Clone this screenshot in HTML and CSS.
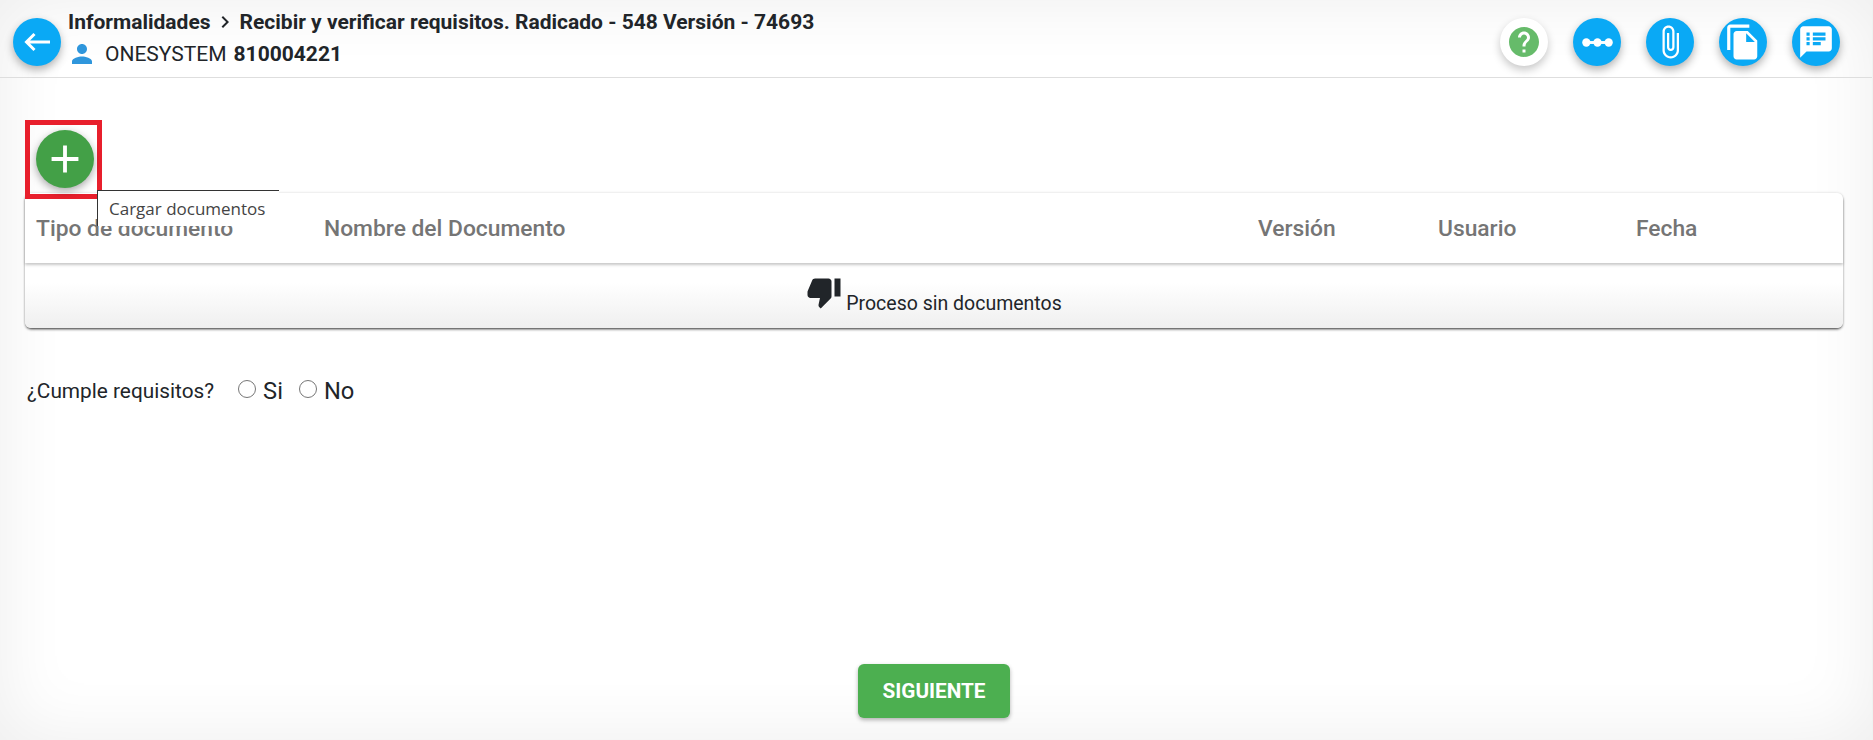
FILE: index.html
```html
<!DOCTYPE html>
<html lang="es">
<head>
<meta charset="utf-8">
<title>Recibir y verificar requisitos</title>
<link rel="stylesheet" href="styles.css">
</head>
<body>
<div class="app">
  <header class="topbar">
    <button class="fab fab-blue back" aria-label="Volver">
      <svg class="ico-back" viewBox="0 0 28 20"><path d="M27 10H4M11.500 2L3.500 10L11.500 18"/></svg>
    </button>
    <div class="heading">
      <div class="crumbs">
        <span>Informalidades</span>
        <svg class="ico-chevron" viewBox="0 0 24 24"><path d="M8.59 16.59L13.17 12 8.59 7.41 10 6l6 6-6 6z"/></svg>
        <span>Recibir y verificar requisitos. Radicado - 548 Versión - 74693</span>
      </div>
      <div class="owner">
        <svg class="ico-person" viewBox="0 0 24 24"><path d="M12 12c2.210 0 4-1.790 4-4s-1.790-4-4-4-4 1.790-4 4 1.790 4 4 4zm0 2c-2.670 0-8 1.340-8 4v2h16v-2c0-2.660-5.330-4-8-4z"/></svg>
        <span class="owner-name">ONESYSTEM</span>
        <strong class="owner-id">810004221</strong>
      </div>
    </div>
    <nav class="actions">
      <button class="fab fab-white" aria-label="Ayuda">
        <svg class="ico-help" viewBox="0 0 24 24"><path d="M12 2C6.48 2 2 6.48 2 12s4.48 10 10 10 10-4.48 10-10S17.52 2 12 2zm1 17h-2v-2h2v2zm2.07-7.75l-.9.92C13.45 12.9 13 13.5 13 15h-2v-.5c0-1.1.45-2.1 1.17-2.83l1.24-1.26c.37-.36.59-.86.59-1.41 0-1.1-.9-2-2-2s-2 .9-2 2H8c0-2.21 1.79-4 4-4s4 1.79 4 4c0 .88-.36 1.68-.93 2.25z"/></svg>
      </button>
      <button class="fab fab-blue" aria-label="Flujo">
        <svg class="ico-white ico-dots" viewBox="0 0 30 10"><rect x="3" y="3.600" width="24" height="2.800"/><circle cx="4.200" cy="5" r="4"/><circle cx="15" cy="5" r="4"/><circle cx="25.800" cy="5" r="4"/></svg>
      </button>
      <button class="fab fab-blue" aria-label="Adjuntos">
        <svg class="ico-white ico-36" viewBox="0 0 24 24"><path d="M16.5 6v11.5c0 2.21-1.79 4-4 4s-4-1.79-4-4V5c0-1.38 1.12-2.5 2.5-2.5s2.5 1.12 2.5 2.5v10.5c0 .55-.45 1-1 1s-1-.45-1-1V6H10v9.5c0 1.38 1.12 2.5 2.5 2.5s2.5-1.12 2.5-2.5V5c0-2.21-1.79-4-4-4S7 2.79 7 5v12.5c0 3.04 2.46 5.5 5.5 5.5s5.5-2.46 5.5-5.5V6h-1.5z"/></svg>
      </button>
      <button class="fab fab-blue" aria-label="Documentos">
        <svg class="ico-white ico-38" viewBox="0 0 24 24"><path d="M16 1H4c-1.1 0-2 .9-2 2v14h2V3h12V1zm-1 4l6 6v10c0 1.1-.9 2-2 2H7.99C6.89 23 6 22.1 6 21l.01-14c0-1.1.89-2 1.99-2h7zm-1 7h5.5L14 6.5V12z"/></svg>
      </button>
      <button class="fab fab-blue" aria-label="Comentarios">
        <svg class="ico-white ico-38" viewBox="0 0 24 24"><path d="M20 2H4c-1.1 0-1.99.9-1.99 2L2 22l4-4h14c1.1 0 2-.9 2-2V4c0-1.1-.9-2-2-2zM8 14H6v-2h2v2zm0-3H6V9h2v2zm0-3H6V6h2v2zm7 6h-5v-2h5v2zm3-3h-8V9h8v2zm0-3h-8V6h8v2z"/></svg>
      </button>
    </nav>
  </header>

  <main class="content">
    <div class="upload">
      <div class="highlight">
        <button class="add" aria-label="Cargar documentos">
          <svg class="ico-add" viewBox="0 0 24 24"><path d="M19 13h-6v6h-2v-6H5v-2h6V5h2v6h6v2z"/></svg>
        </button>
      </div>
      <div class="tooltip">Cargar documentos</div>
    </div>

    <section class="table">
      <div class="thead">
        <div>Tipo de documento</div>
        <div>Nombre del Documento</div>
        <div>Versión</div>
        <div>Usuario</div>
        <div>Fecha</div>
      </div>
      <div class="tbody">
        <svg class="ico-thumb" viewBox="0 0 24 24"><path d="M15 3H6c-.83 0-1.54.5-1.84 1.22l-3.02 7.05c-.09.23-.14.47-.14.73v2c0 1.1.9 2 2 2h6.31l-.95 4.57-.03.32c0 .41.17.79.44 1.06L9.83 23l6.59-6.59c.36-.36.58-.86.58-1.41V5c0-1.1-.9-2-2-2zm4 0v12h4V3h-4z"/></svg>
        <span>Proceso sin documentos</span>
      </div>
    </section>

    <form class="question">
      <span class="question-label">¿Cumple requisitos?</span>
      <label class="option"><input type="radio" name="cumple"><span>Si</span></label>
      <label class="option"><input type="radio" name="cumple"><span>No</span></label>
    </form>

    <div class="footer">
      <button class="next">SIGUIENTE</button>
    </div>
  </main>
</div>
</body>
</html>
```
FILE: styles.css
```css
* { box-sizing: border-box; }
html, body { margin: 0; height: 100%; }
body {
  font-family: Roboto, "Liberation Sans", sans-serif;
  color: #212529;
  background: #eef3f1;
  overflow: hidden;
}
button { border: 0; padding: 0; font: inherit; cursor: pointer; }
svg { display: block; }

.app {
  width: 1872px;
  height: 740px;
  background: #fff;
  box-shadow: inset 0 0 70px rgba(0, 0, 0, .075);
  display: flex;
  flex-direction: column;
}

.topbar {
  height: 78px;
  flex: none;
  display: flex;
  align-items: flex-start;
  padding: 18px 32px 0 13px;
  border-bottom: 1px solid #dedede;
}
.fab {
  width: 48px;
  height: 48px;
  border-radius: 50%;
  flex: none;
  display: flex;
  align-items: center;
  justify-content: center;
}
.fab-blue { background: #0aa9f5; box-shadow: 0 4px 9px rgba(0, 0, 0, .3); }
.fab-white { background: #fff; box-shadow: 0 4px 9px rgba(0, 0, 0, .22); }
.ico-white { fill: #fff; }
.ico-back { width: 28px; height: 20px; fill: none; stroke: #fff; stroke-width: 3; }
.ico-help { width: 36px; height: 36px; fill: #66bb6a; }
.ico-dots { width: 31px; height: 11px; }
.ico-36 { width: 36px; height: 36px; }
.ico-38 { width: 38px; height: 38px; }

.heading { margin: -8px 0 0 7px; }
.crumbs {
  display: flex;
  align-items: center;
  height: 24px;
  font-size: 21px;
  font-weight: 700;
  color: #212529;
}
.ico-chevron { width: 24px; height: 24px; fill: #212529; margin: 0 3px 0 2px; }
.owner { display: flex; align-items: center; height: 26px; margin-top: 7px; font-size: 21px; }
.ico-person { width: 30px; height: 30px; fill: #2f96dc; margin: 0 8px 0 -1px; flex: none; }
.owner-id { margin-left: 7px; font-weight: 700; }

.actions { margin-left: auto; display: flex; gap: 25px; }

.content {
  flex: 1;
  min-height: 0;
  display: flex;
  flex-direction: column;
  padding: 42px 29px 22px 25px;
}
.upload { position: relative; z-index: 2; height: 73px; flex: none; }
.highlight {
  width: 77px;
  height: 79px;
  padding: 5px 0 0 6px;
  border: 5px solid #e81f2c;
}
.add {
  width: 58px;
  height: 58px;
  border-radius: 50%;
  background: #43a047;
  display: flex;
  align-items: center;
  justify-content: center;
  box-shadow: 0 3px 8px rgba(0, 0, 0, .35);
}
.ico-add { width: 46px; height: 46px; fill: #fff; }
.tooltip {
  position: absolute;
  left: 72px;
  top: 70px;
  width: 182px;
  height: 36px;
  padding: 6px 0 0 11px;
  background: #fff;
  border-top: 1px solid #333;
  border-left: 1px solid #333;
  font-family: "Open Sans", sans-serif;
  font-size: 17px;
  line-height: 24px;
  color: #444;
}

.table {
  flex: none;
  border-radius: 6px;
  box-shadow: 0 2px 3px -1px rgba(0, 0, 0, .8), 0 0 3px rgba(0, 0, 0, .15);
}
.thead {
  height: 70px;
  display: grid;
  grid-template-columns: 288px 934px 180px 198px 1fr;
  align-items: center;
  font-size: 22.8px;
  font-weight: 500;
  color: #757575;
  background: #fff;
  border-radius: 6px 6px 0 0;
  box-shadow: 0 2px 3px rgba(0, 0, 0, .22);
  position: relative;
}
.thead div { padding-left: 11px; }
.tbody {
  height: 65px;
  display: flex;
  justify-content: center;
  align-items: flex-end;
  padding-bottom: 12px;
  gap: 4px;
  font-size: 19.5px;
  line-height: 24px;
  background: linear-gradient(#fff 30%, #efefef);
  border-radius: 0 0 6px 6px;
}
.ico-thumb { width: 36px; height: 36px; fill: #212529; margin-bottom: 6px; }

.question {
  display: flex;
  align-items: center;
  margin: 49px 0 0 2px;
  height: 28px;
}
.question-label { font-size: 20.8px; margin-right: 24px; }
.option { display: flex; align-items: center; font-size: 23.7px; margin-right: 16px; }
.option input { width: 18px; height: 18px; margin: 0 7px 4px 0; }

.footer { margin-top: auto; display: flex; justify-content: center; }
.next {
  width: 152px;
  height: 54px;
  border-radius: 6px;
  background: #4caf50;
  color: #fff;
  font-size: 20.7px;
  font-weight: 700;
  box-shadow: 0 2px 4px rgba(0, 0, 0, .3);
}
```
